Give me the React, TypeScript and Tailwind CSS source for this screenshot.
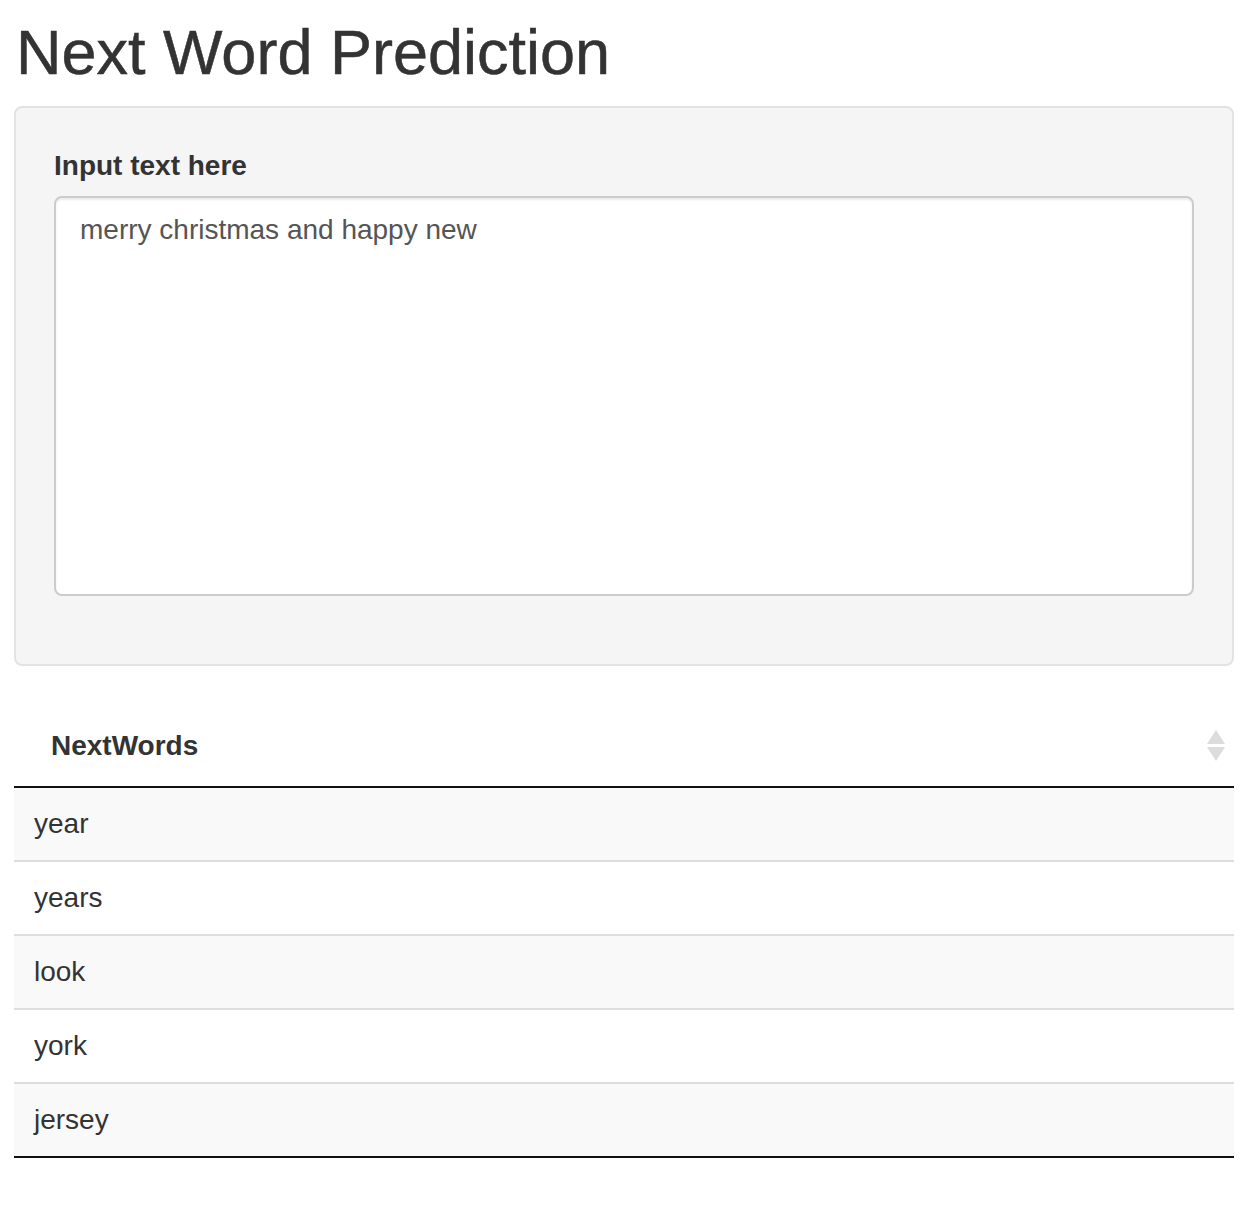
const words = ["year", "years", "look", "york", "jersey"];

function SortIcon() {
  return (
    <svg width="18" height="32" viewBox="0 0 18 32" className="text-[#dcdcdc]">
      <path d="M9 0 L18 14 L0 14 Z" fill="currentColor" />
      <path d="M0 17 L18 17 L9 31 Z" fill="currentColor" />
    </svg>
  );
}

export default function App() {
  return (
    <div className="min-h-[1210px] bg-white pl-[14px] pr-[18px] pt-[18px] font-['Liberation_Sans',Arial,sans-serif] text-[#333]">
      <h1 className="mb-[20px] pl-[2px] text-[63px] font-normal leading-[68px] text-[#333] [-webkit-text-stroke:0.5px_#333]">
        Next Word Prediction
      </h1>

      <div className="rounded-[8px] border-2 border-[#e3e3e3] bg-[#f5f5f5] px-[38px] pt-[38px] pb-[38px]">
        <div className="mb-[30px]">
          <label className="mb-[10px] block text-[28px] font-bold leading-[40px]">
            Input text here
          </label>
          <textarea
            defaultValue="merry christmas and happy new"
            className="block h-[400px] w-full resize-none rounded-[8px] border-2 border-[#ccc] bg-white px-[24px] py-[12px] text-[28px] leading-[40px] text-[#555] shadow-[inset_0_2px_2px_rgba(0,0,0,0.075)] outline-none"
          />
        </div>
      </div>

      <table className="mt-[40px] w-full border-collapse text-[28px] leading-[40px]">
        <thead>
          <tr className="border-b-2 border-[#111]">
            <th className="py-[20px] pl-[37px] pr-[36px] text-left font-bold">
              <div className="flex items-center justify-between">
                <span>NextWords</span>
                <span className="-mr-[27px] flex">
                  <SortIcon />
                </span>
              </div>
            </th>
          </tr>
        </thead>
        <tbody>
          {words.map((w, i) => (
            <tr
              key={w}
              className={
                (i % 2 === 0 ? "bg-[#f9f9f9] " : "bg-white ") +
                (i === words.length - 1 ? "border-b-2 border-[#111]" : "border-b-2 border-[#ddd]")
              }
            >
              <td className="px-[20px] py-[16px] text-left">{w}</td>
            </tr>
          ))}
        </tbody>
      </table>
    </div>
  );
}
